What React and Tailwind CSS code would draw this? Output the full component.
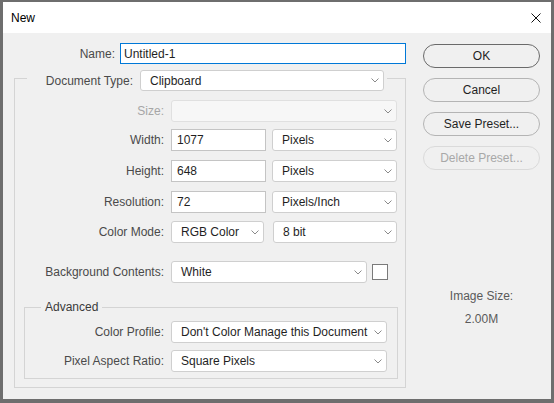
import React from "react";

function Chevron() {
  return (
    <svg width="8" height="5" viewBox="0 0 8 5" className="shrink-0">
      <polyline points="0.5,0.5 4,4 7.5,0.5" fill="none" stroke="#8a8a8a" strokeWidth="1" />
    </svg>
  );
}

function Select({ w, value, disabled, h = "h-[22px]" }) {
  return (
    <div
      className={`${w} ${h} flex items-center justify-between rounded-[3px] border pl-[9px] pr-[4px] ${
        disabled ? "border-[#e0e0e0] bg-[#f7f7f7]" : "border-[#cfcfcf] bg-white"
      }`}
    >
      <span className="whitespace-nowrap text-[#1f1f1f]">{value}</span>
      <Chevron />
    </div>
  );
}

function Input({ value }) {
  return (
    <div className="flex h-[22px] w-[95px] items-center border border-[#c4c4c4] bg-white pl-[5px] text-[#1f1f1f]">
      {value}
    </div>
  );
}

function Label({ children, w = "w-[149px]", muted }) {
  return (
    <div className={`${w} shrink-0 text-right whitespace-nowrap ${muted ? "text-[#a6a6a6]" : "text-[#4a4a4a]"}`}>
      {children}
    </div>
  );
}

function Button({ children, variant }) {
  const cls =
    variant === "default"
      ? "border-[#6a6a6a] text-[#1f1f1f]"
      : variant === "disabled"
      ? "border-[#dadada] text-[#a8a8a8]"
      : "border-[#b4b4b4] text-[#1f1f1f]";
  return (
    <div className={`flex h-[24px] w-[117px] items-center justify-center rounded-full border ${cls}`}>
      {children}
    </div>
  );
}

export default function App() {
  return (
    <div className="flex h-[403px] w-[554px] flex-col overflow-hidden border-x-[3px] border-t-[2px] border-b-[4px] border-[#6e6e6e] bg-[#f0f0f0] font-['Liberation_Sans',Arial,sans-serif] text-[12px] leading-none text-[#1f1f1f]">
      {/* Title bar */}
      <div className="flex h-[31px] shrink-0 items-center justify-between bg-white pl-[8px] pr-[10px]">
        <span className="text-black">New</span>
        <svg width="10" height="10" viewBox="0 0 10 10">
          <path d="M0.5 0.5 L9.5 9.5 M9.5 0.5 L0.5 9.5" stroke="#111" strokeWidth="1" fill="none" />
        </svg>
      </div>

      {/* Body */}
      <div className="flex flex-1">
        {/* Left column */}
        <div className="w-[403px] shrink-0 pl-[11px]">
          {/* Name row */}
          <div className="mt-[10px] flex h-[21px] items-center gap-[5px]">
            <Label w="w-[101px]">Name:</Label>
            <div className="flex h-[21px] w-[286px] items-center border border-[#0078d7] bg-white pl-[3px] text-[#1f1f1f]">
              Untitled-1
            </div>
          </div>

          {/* Document Type group */}
          <fieldset className="mt-[2px] w-[392px] border border-[#d4d4d4]">
            <legend className="ml-[12px] px-[3px] pt-[4px]">
              <div className="flex items-center gap-[7px]">
                <Label w="w-[103px]">Document Type:</Label>
                <Select w="w-[244px]" h="h-[21px]" value="Clipboard" />
              </div>
            </legend>

            <div className="mt-[9px] flex items-center gap-[7px]">
              <Label muted>Size:</Label>
              <Select w="w-[226px]" value="" disabled />
            </div>

            <div className="mt-[7px] flex items-center gap-[7px]">
              <Label>Width:</Label>
              <Input value="1077" />
              <div className="ml-[-1px]">
                <Select w="w-[125px]" value="Pixels" />
              </div>
            </div>

            <div className="mt-[9px] flex items-center gap-[7px]">
              <Label>Height:</Label>
              <Input value="648" />
              <div className="ml-[-1px]">
                <Select w="w-[125px]" value="Pixels" />
              </div>
            </div>

            <div className="mt-[9px] flex items-center gap-[7px]">
              <Label>Resolution:</Label>
              <Input value="72" />
              <div className="ml-[-1px]">
                <Select w="w-[125px]" value="Pixels/Inch" />
              </div>
            </div>

            <div className="mt-[8px] flex items-center gap-[7px]">
              <Label>Color Mode:</Label>
              <Select w="w-[93px]" value="RGB Color" />
              <div className="ml-[2px]">
                <Select w="w-[124px]" value="8 bit" />
              </div>
            </div>

            <div className="mt-[18px] flex items-center gap-[7px]">
              <Label>Background Contents:</Label>
              <Select w="w-[196px]" value="White" />
              <div className="ml-[-2px] h-[16px] w-[16px] border-[1.5px] border-[#7a7a7a] bg-white" />
            </div>

            {/* Advanced group */}
            <fieldset className="mb-[8px] ml-[9px] mt-[16px] w-[374px] border border-[#d4d4d4] pb-[6px]">
              <legend className="ml-[16px] px-[4px] text-[#3a3a3a]">
                <div className="flex h-[16px] items-center">Advanced</div>
              </legend>

              <div className="mt-[6px] flex items-center gap-[7px]">
                <Label w="w-[139px]">Color Profile:</Label>
                <Select w="w-[216px]" value="Don't Color Manage this Document" />
              </div>

              <div className="mt-[7px] flex items-center gap-[7px]">
                <Label w="w-[139px]">Pixel Aspect Ratio:</Label>
                <Select w="w-[216px]" value="Square Pixels" />
              </div>
            </fieldset>
          </fieldset>
        </div>

        {/* Right column */}
        <div className="ml-[17px] flex w-[117px] flex-col pt-[11px]">
          <div className="flex flex-col gap-[10px]">
            <Button variant="default">OK</Button>
            <Button>Cancel</Button>
            <Button>Save Preset...</Button>
            <Button variant="disabled">Delete Preset...</Button>
          </div>
          <div className="mt-[118px] flex flex-col items-center gap-[7px] text-[#5a5a5a]">
            <div className="flex h-[16px] items-center">Image Size:</div>
            <div className="flex h-[16px] items-center">2.00M</div>
          </div>
        </div>
      </div>
    </div>
  );
}
